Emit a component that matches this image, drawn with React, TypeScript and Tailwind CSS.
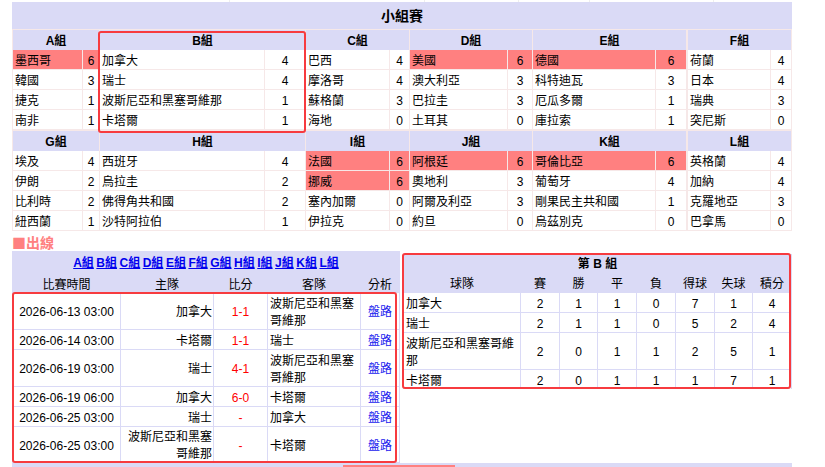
const font = { fontFamily: '"Liberation Sans", "Noto Sans CJK TC", sans-serif' };

type Group = { name: string; w: string; grid: string; teams: [string, number, boolean?][] };

const topGroups: Group[] = [
  { name: 'A組', w: 'w-[86px]', grid: 'grid-cols-[69px_16px]', teams: [['墨西哥', 6, true], ['韓國', 3], ['捷克', 1], ['南非', 1]] },
  { name: 'B組', w: 'w-[205px]', grid: 'grid-cols-[164px_40px]', teams: [['加拿大', 4], ['瑞士', 4], ['波斯尼亞和黑塞哥維那', 1], ['卡塔爾', 1]] },
  { name: 'C組', w: 'w-[103px]', grid: 'grid-cols-[83px_19px]', teams: [['巴西', 4], ['摩洛哥', 4], ['蘇格蘭', 3], ['海地', 0]] },
  { name: 'D組', w: 'w-[122px]', grid: 'grid-cols-[97px_24px]', teams: [['美國', 6, true], ['澳大利亞', 3], ['巴拉圭', 3], ['土耳其', 0]] },
  { name: 'E組', w: 'w-[153px] mr-px', grid: 'grid-cols-[122px_30px]', teams: [['德國', 6, true], ['科特迪瓦', 3], ['厄瓜多爾', 1], ['庫拉索', 1]] },
  { name: 'F組', w: 'w-[103px]', grid: 'grid-cols-[82px_20px]', teams: [['荷蘭', 4], ['日本', 4], ['瑞典', 3], ['突尼斯', 0]] },
];

const bottomGroups: Group[] = [
  { name: 'G組', w: 'w-[86px]', grid: 'grid-cols-[69px_16px]', teams: [['埃及', 4], ['伊朗', 2], ['比利時', 2], ['紐西蘭', 1]] },
  { name: 'H組', w: 'w-[205px]', grid: 'grid-cols-[164px_40px]', teams: [['西班牙', 4], ['烏拉圭', 2], ['佛得角共和國', 2], ['沙特阿拉伯', 1]] },
  { name: 'I組', w: 'w-[103px]', grid: 'grid-cols-[83px_19px]', teams: [['法國', 6, true], ['挪威', 6, true], ['塞內加爾', 0], ['伊拉克', 0]] },
  { name: 'J組', w: 'w-[122px]', grid: 'grid-cols-[97px_24px]', teams: [['阿根廷', 6, true], ['奧地利', 3], ['阿爾及利亞', 3], ['約旦', 0]] },
  { name: 'K組', w: 'w-[153px] mr-px', grid: 'grid-cols-[122px_30px]', teams: [['哥倫比亞', 6, true], ['葡萄牙', 4], ['剛果民主共和國', 1], ['烏茲別克', 0]] },
  { name: 'L組', w: 'w-[103px]', grid: 'grid-cols-[82px_20px]', teams: [['英格蘭', 4], ['加納', 4], ['克羅地亞', 3], ['巴拿馬', 0]] },
];

const matches = [
  ['2026-06-13 03:00', '加拿大', '1-1', '波斯尼亞和黑塞哥維那', 'h-[36px]'],
  ['2026-06-14 03:00', '卡塔爾', '1-1', '瑞士', 'h-[19px]'],
  ['2026-06-19 03:00', '瑞士', '4-1', '波斯尼亞和黑塞哥維那', 'h-[36px]'],
  ['2026-06-19 06:00', '加拿大', '6-0', '卡塔爾', 'h-[19px]'],
  ['2026-06-25 03:00', '瑞士', '-', '加拿大', 'h-[19px]'],
  ['2026-06-25 03:00', '波斯尼亞和黑塞哥維那', '-', '卡塔爾', 'h-[35px]'],
];

const standings = [
  ['加拿大', 2, 1, 1, 0, 7, 1, 4],
  ['瑞士', 2, 1, 1, 0, 5, 2, 4],
  ['波斯尼亞和黑塞哥維那', 2, 0, 1, 1, 2, 5, 1],
  ['卡塔爾', 2, 0, 1, 1, 1, 7, 1],
];

const links = ['A組', 'B組', 'C組', 'D組', 'E組', 'F組', 'G組', 'H組', 'I組', 'J組', 'K組', 'L組'];

function GroupBox({ g, marked }: { g: Group; marked?: boolean }) {
  return (
    <div className={`relative ${g.w}`}>
      <div className="h-[20px] leading-[22px] bg-[#dadaf6] text-center font-bold text-[12px] text-black">{g.name}</div>
      <div className={`grid ${g.grid} gap-x-px`}>
        {g.teams.map(([team, pts, hot]) => (
          <div key={team} className="contents">
            <div className={`h-[19px] mb-px leading-[22px] pl-[2px] text-[12px] whitespace-nowrap ${hot ? 'bg-[#ff8080]' : 'bg-white'}`}>{team}</div>
            <div className={`h-[19px] mb-px leading-[22px] text-center text-[12px] ${hot ? 'bg-[#ff8080]' : 'bg-white'}`}>{pts}</div>
          </div>
        ))}
      </div>
      {marked && <div className="absolute z-10 -left-[2px] top-[1px] -right-[1px] -bottom-[3px] border-[2px] border-[#f73b3f] rounded-[3px]" />}
    </div>
  );
}

export default function App() {
  return (
    <div className="w-[825px] h-[467px] overflow-hidden bg-white text-black" style={font}>
      <div className="ml-[12px] w-[780px]">
        <div className="h-[2px] flex">
          <div className="w-[218px] border-r border-[#eeeeee]" />
          <div className="w-[195px] border-r border-[#eeeeee]" />
          <div className="w-[94px] border-r border-[#eeeeee]" />
          <div className="w-[71px] border-r border-[#eeeeee]" />
          <div className="w-[124px] border-r border-[#eeeeee]" />
        </div>
        <div className="h-[27px] leading-[29px] bg-[#dadaf6] text-center font-bold text-[14px]">小組賽</div>
        <div className="bg-[#f6e8e8] pt-px pl-px pr-px">
          <div className="flex gap-[1px] pb-[1px]">
            {topGroups.map((g) => <GroupBox key={g.name} g={g} marked={g.name === 'B組'} />)}
          </div>
          <div className="flex gap-[1px]">
            {bottomGroups.map((g) => <GroupBox key={g.name} g={g} />)}
          </div>
        </div>
        <div className="h-[20px] leading-[22px] text-[14px] font-bold text-[#ff8080]">
          <span className="font-['Noto_Sans_CJK_TC']">■</span>出線
        </div>

        <div className="flex items-start justify-between h-[212px]">
          <div className="w-[388px] h-[212px] bg-[#dadaf6]">
            <div className="h-[24px] flex justify-center gap-[2.5px] items-center">
              {links.map((l) => (
                <a key={l} href="#" className="text-[12px] font-bold underline text-[#0000ee]">{l}</a>
              ))}
            </div>
            <div className="grid grid-cols-[107px_92px_53px_92px_38px] gap-x-px pl-px h-[17px] leading-[20px] text-[12px] text-center">
              <div>比賽時間</div><div>主隊</div><div>比分</div><div>客隊</div><div>分析</div>
            </div>
            <div className="relative mt-px pl-px">
              <div className="flex flex-col gap-px">
                {matches.map(([time, home, score, away, h], i) => (
                  <div key={i} className={`grid grid-rows-1 grid-cols-[107px_92px_53px_92px_38px] gap-x-px ${h} text-[12px] leading-[17px]`}>
                    <div className="bg-white flex items-center justify-center pt-[3px]">{time}</div>
                    <div className="bg-white flex items-center justify-end text-right pr-px pt-[3px]">{home}</div>
                    <div className="bg-white flex items-center justify-center text-[#ff0000] pt-[3px]">{score}</div>
                    <div className="bg-white flex items-center pl-[2px] pt-[3px]">{away}</div>
                    <div className="bg-white flex items-center justify-center text-[#2222ee] pt-[3px]">盤路</div>
                  </div>
                ))}
              </div>
              <div className="absolute -top-px -bottom-px left-0 right-[3px] border-[2px] border-[#f73b3f] rounded-[3px]" />
            </div>
          </div>

          <div className="relative w-[389px] bg-[#dadaf6] mt-[3px]">
            <div className="h-[19px] leading-[21px] text-center font-bold text-[12px]">第 B 組</div>
            <div className="grid grid-cols-[116px_38px_37px_38px_38px_38px_37px_38px] gap-x-px pl-px h-[20px] leading-[23px] text-[12px] text-center">
              {['球隊', '賽', '勝', '平', '負', '得球', '失球', '積分'].map((t) => <div key={t}>{t}</div>)}
            </div>
            <div className="flex flex-col gap-px pl-px">
              {standings.map((row) => (
                <div key={row[0]} className={`grid grid-rows-1 grid-cols-[116px_38px_37px_38px_38px_38px_37px_38px] gap-x-px text-[12px] leading-[17px] ${row[0] === '波斯尼亞和黑塞哥維那' ? 'h-[36px]' : 'h-[19px]'}`}>
                  {row.map((v, i) => (
                    <div key={i} className={`bg-white flex items-center pt-[3px] ${i === 0 ? 'pl-[2px] pr-[4px]' : 'justify-center'}`}>{v}</div>
                  ))}
                </div>
              ))}
            </div>
            <div className="absolute -left-px right-px -top-px bottom-0 border-[2px] border-[#f73b3f] rounded-[3px]" />
          </div>
        </div>
        <div className="h-[4px] bg-[#dadaf6] pt-[2px] pl-[331px]">
          <div className="h-[2px] w-[112px] bg-[#ff8080]" />
        </div>
      </div>
    </div>
  );
}
